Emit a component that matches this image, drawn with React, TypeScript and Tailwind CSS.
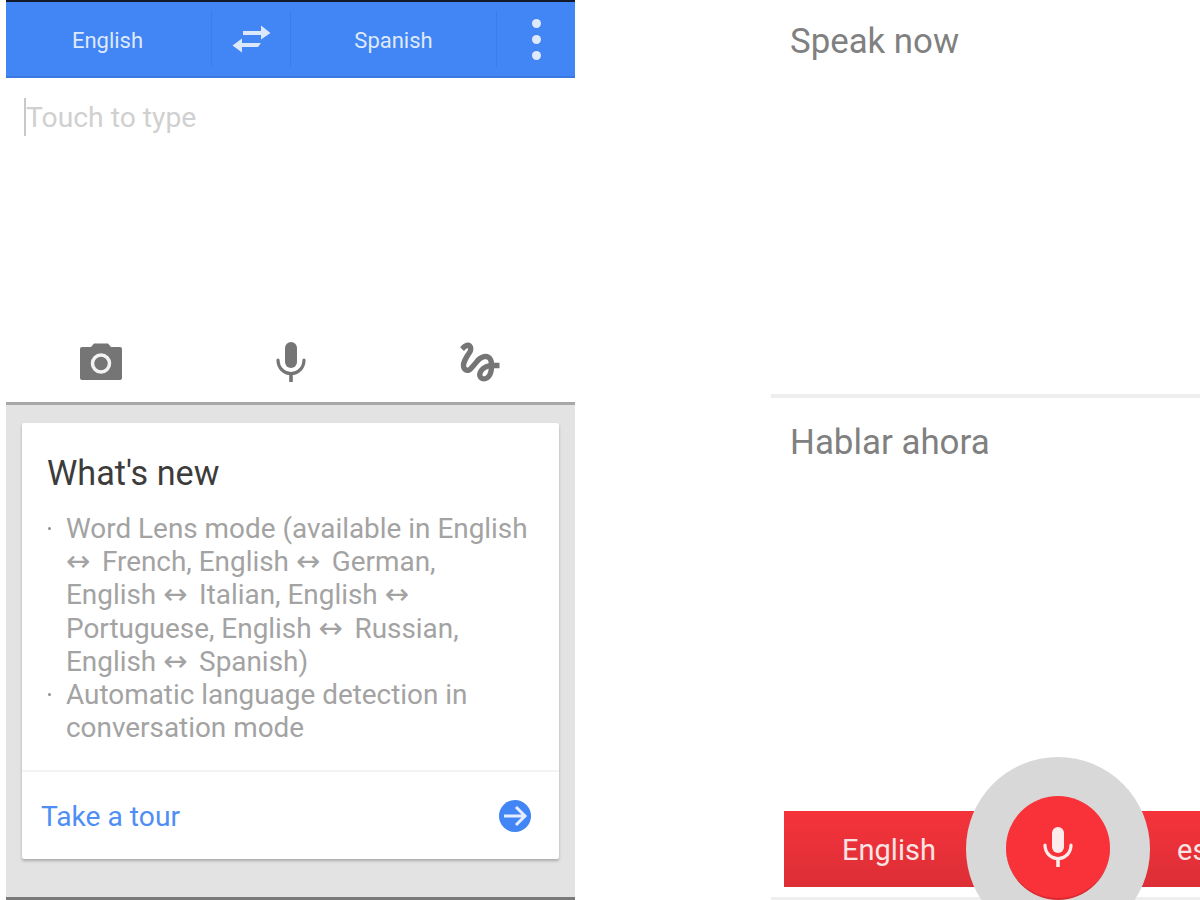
const FONT = "font-['Roboto',sans-serif]";

function SwapIcon() {
  return (
    <svg width="40" height="28" viewBox="0 0 40 28" fill="#dbe7fb">
      <path d="M11 6h18V0.500L38.500 8 29 14.500V10H11z" />
      <path d="M29 18H10v-4.500L0.500 20.500 10 27.500V22h16z" />
    </svg>
  );
}

function CameraIcon() {
  return (
    <svg width="44" height="40" viewBox="0 0 44 40">
      <path
        d="M3 5h9l3-3.500h14l3 3.500h9a2 2 0 0 1 2 2v29a2 2 0 0 1-2 2H3a2 2 0 0 1-2-2V7a2 2 0 0 1 2-2z"
        fill="#757575"
      />
      <circle cx="22" cy="21.500" r="8.500" fill="none" stroke="#f2f2f2" strokeWidth="3.500" />
    </svg>
  );
}

function MicIcon({ color }: { color: string }) {
  return (
    <svg width="32" height="42" viewBox="0 0 32 42" fill="none">
      <rect x="10" y="1" width="12" height="26" rx="6" fill={color} />
      <path d="M3 19c0 8 6 13.500 13 13.500S29 27 29 19" stroke={color} strokeWidth="3.200" strokeLinecap="round" />
      <path d="M16 32v9" stroke={color} strokeWidth="3.600" />
    </svg>
  );
}

function GestureIcon() {
  return (
    <svg width="52" height="52" viewBox="0 0 24 24" fill="#757575">
      <path d="M4.59 6.89c.7-.71 1.4-1.35 1.71-1.22.5.2 0 1.03-.3 1.52-.25.42-2.86 3.89-2.86 6.31 0 1.28.48 2.34 1.34 2.98.75.56 1.74.73 2.64.46 1.07-.31 1.95-1.4 3.06-2.77 1.21-1.49 2.83-3.44 4.08-3.44 1.63 0 1.65 1.01 1.76 1.79-3.78.64-5.38 3.67-5.38 5.37 0 1.7 1.44 3.09 3.21 3.09 1.63 0 4.29-1.33 4.69-6.1H21v-2.5h-2.47c-.15-1.65-1.09-4.2-4.03-4.2-2.25 0-4.18 1.91-4.94 2.84-.58.73-2.06 2.48-2.29 2.72-.25.3-.68.84-1.11.84-.45 0-.72-.83-.36-1.92.35-1.09 1.4-2.86 1.85-3.52.78-1.14 1.3-1.92 1.3-3.28C8.95 3.69 7.31 3 6.44 3 5.12 3 3.97 4 3.72 4.25c-.36.36-.66.66-.88.93l1.75 1.71zm9.29 11.66c-.31 0-.74-.26-.74-.72 0-.6.73-2.2 2.87-2.76-.3 2.69-1.43 3.48-2.13 3.48z" />
    </svg>
  );
}

function Sep() {
  return <div className="w-px h-[56px] bg-[#3f7de6]" />;
}

function Arrow() {
  return <span className="inline-block w-[29px] font-['DejaVu_Sans',sans-serif] text-[29px] leading-none">↔</span>;
}

function Bullet({ children }: { children: React.ReactNode }) {
  return (
    <div className="flex">
      <span className="mt-[15px] w-[3px] h-[3px] rounded-full bg-[#909090] shrink-0" />
      <span className="ml-[15px]">{children}</span>
    </div>
  );
}

function TranslatePane() {
  return (
    <div className="ml-[6px] w-[569px] h-[900px] flex flex-col shrink-0">
      <div className="h-[2px] bg-[#12192b]" />
      <div className="h-[76px] flex items-center bg-[#4285f4] border-b-[2px] border-[#3b78e0] text-[#dfe9fc] text-[22px]">
        <div className="w-[205px] pt-[2px] pr-[2px] text-center">English</div>
        <Sep />
        <div className="w-[78px] flex justify-center pl-px">
          <SwapIcon />
        </div>
        <Sep />
        <div className="w-[205px] pt-[2px] text-center">Spanish</div>
        <Sep />
        <div className="flex-1 flex flex-col items-center gap-[7px]">
          <span className="w-[9px] h-[9px] rounded-full bg-[#dfe9fc]" />
          <span className="w-[9px] h-[9px] rounded-full bg-[#dfe9fc]" />
          <span className="w-[9px] h-[9px] rounded-full bg-[#dfe9fc]" />
        </div>
      </div>
      <div className="h-[244px] pt-[20px] pl-[18px] flex items-start">
        <div className="w-[2px] h-[38px] bg-[#c8c8c8]" />
        <div className="text-[28.300px] leading-[40px] text-[#d0d0d0]">Touch to type</div>
      </div>
      <div className="h-[80px] flex items-center">
        <div className="w-[190px] flex justify-center pl-[1px]">
          <CameraIcon />
        </div>
        <div className="w-[190px] flex justify-center">
          <MicIcon color="#757575" />
        </div>
        <div className="w-[190px] flex justify-center">
          <GestureIcon />
        </div>
      </div>
      <div className="flex-1 bg-[#e3e3e3] border-t-[3px] border-[#a8a8a8] border-b-[3px] border-b-[#7a7a7a] px-[16px] pt-[18px]">
        <div className="h-[436px] bg-white rounded-[2px] shadow-[0_2px_3px_rgba(0,0,0,0.25)] flex flex-col">
          <div className="h-[349px] border-b-[2px] border-[#f3f3f3] pl-[26px]">
            <div className="pt-[29px] -ml-px text-[34.200px] leading-[42px] text-[#3c3c3c]">What's new</div>
            <div className="mt-[18px] text-[27.900px] leading-[33.200px] text-[#a3a3a3]">
              <Bullet>
                Word Lens mode (available in English
                <br />
                <Arrow /> French, English <Arrow /> German,
                <br />
                English <Arrow /> Italian, English <Arrow />
                <br />
                Portuguese, English <Arrow /> Russian,
                <br />
                English <Arrow /> Spanish)
              </Bullet>
              <Bullet>
                Automatic language detection in
                <br />
                conversation mode
              </Bullet>
            </div>
          </div>
          <div className="flex-1 flex items-center justify-between pl-[19px] pr-[27px]">
            <span className="pt-[3px] text-[28.200px] text-[#4f8ef5]">Take a tour</span>
            <svg width="34" height="34" viewBox="0 0 34 34" fill="none">
              <circle cx="17" cy="17" r="16" fill="#4285f4" />
              <path d="M6 17h21M18 8l9 9-9 9" stroke="#e4edfd" strokeWidth="3" />
            </svg>
          </div>
        </div>
      </div>
    </div>
  );
}

function SpeechPane() {
  return (
    <div className="ml-[196px] flex-1 h-[900px] flex flex-col relative overflow-hidden">
      <div className="h-[394px] pl-[19px] pt-[18px] text-[34.800px] leading-[46px] text-[#808080]">Speak now</div>
      <div className="h-[4px] bg-[#eeeeee]" />
      <div className="h-[413px] pl-[19px] pt-[22px] text-[34.900px] leading-[46px] text-[#808080]">Hablar ahora</div>
      <div className="ml-[13px] h-[76px] pt-[3px] bg-gradient-to-b from-[#f5333b] to-[#dc2e36] flex items-center text-[29px] text-[#fbe3e4]">
        <div className="w-[210px] shrink-0 text-center">English</div>
        <div className="ml-[183px] shrink-0">español</div>
      </div>
      <div className="mt-[10px] h-[3px] bg-[#eeeeee]" />
      {/* mic button sits over the language bar */}
      <div className="absolute left-[195px] top-[757px] w-[184px] h-[184px] rounded-full bg-[#d8d8d8] flex items-start justify-center pt-[39px] pr-px">
        <div className="w-[104px] h-[104px] rounded-full bg-[#f93239] border-b-[2px] border-[#d92a30] flex items-center justify-center">
          <MicIcon color="#fdecec" />
        </div>
      </div>
    </div>
  );
}

export default function App() {
  return (
    <div className={`${FONT} w-[1200px] h-[900px] flex bg-white overflow-hidden`}>
      <TranslatePane />
      <SpeechPane />
    </div>
  );
}
